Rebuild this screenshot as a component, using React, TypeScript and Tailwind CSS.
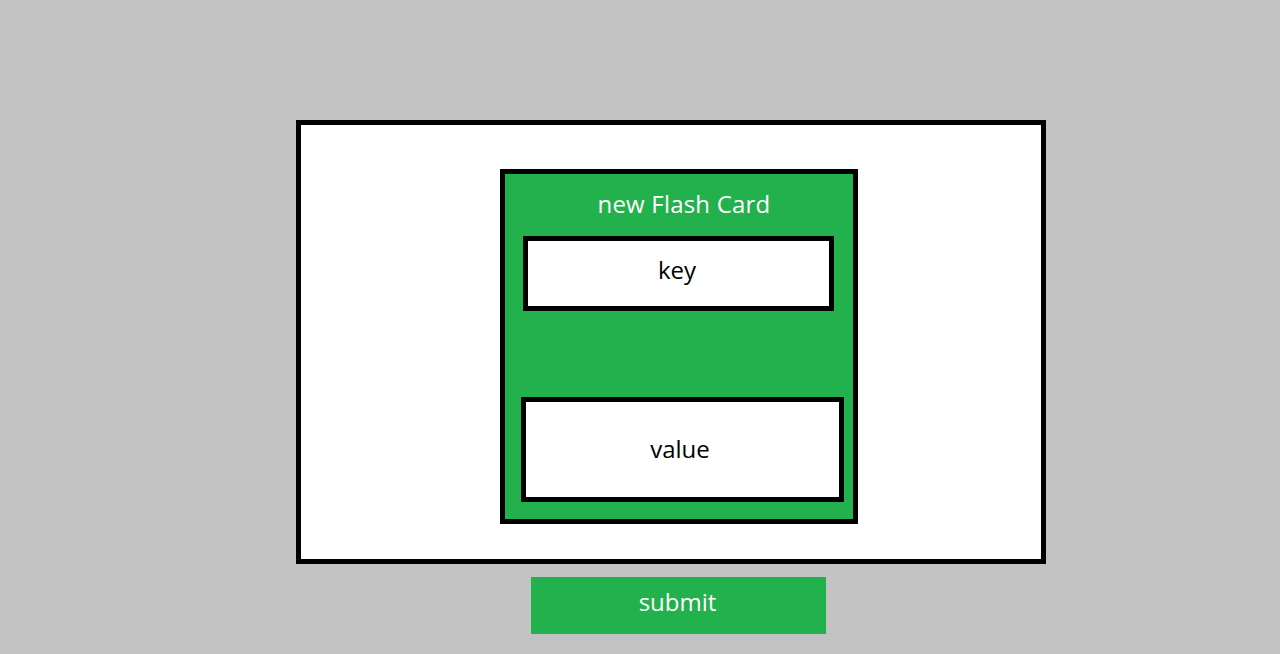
export default function App() {
  return (
    <div
      className="min-h-[654px] w-full bg-[#c3c3c3] pt-[120px] pl-[296px]"
      style={{ fontFamily: '"Open Sans", "Noto Sans", sans-serif' }}
    >
      {/* Outer frame */}
      <div className="w-[750px] h-[444px] border-[5px] border-black bg-white pt-[44px] pl-[199px]">
        {/* Flash card */}
        <div className="w-[358px] h-[355px] border-[5px] border-black bg-[#22b14c] pt-[15px]">
          <div className="text-center text-[24px] leading-[30px] text-white pl-[10px] tracking-[0.2px]">new Flash Card</div>
          <div className="mt-[17px] ml-[18px] w-[311px] h-[75px] border-[5px] border-black bg-white flex items-center justify-center pb-[7px] pr-[3px] text-[24px] text-black">
            key
          </div>
          <div className="mt-[86px] ml-[16px] w-[323px] h-[105px] border-[5px] border-black bg-white flex items-center justify-center pb-[2px] pr-[5px] text-[24px] text-black">
            value
          </div>
        </div>
      </div>
      {/* Submit */}
      <button className="mt-[13px] ml-[235px] w-[295px] h-[57px] bg-[#22b14c] text-white text-[24px] flex items-center justify-center pb-[8px] pr-[2px]">
        submit
      </button>
    </div>
  );
}
